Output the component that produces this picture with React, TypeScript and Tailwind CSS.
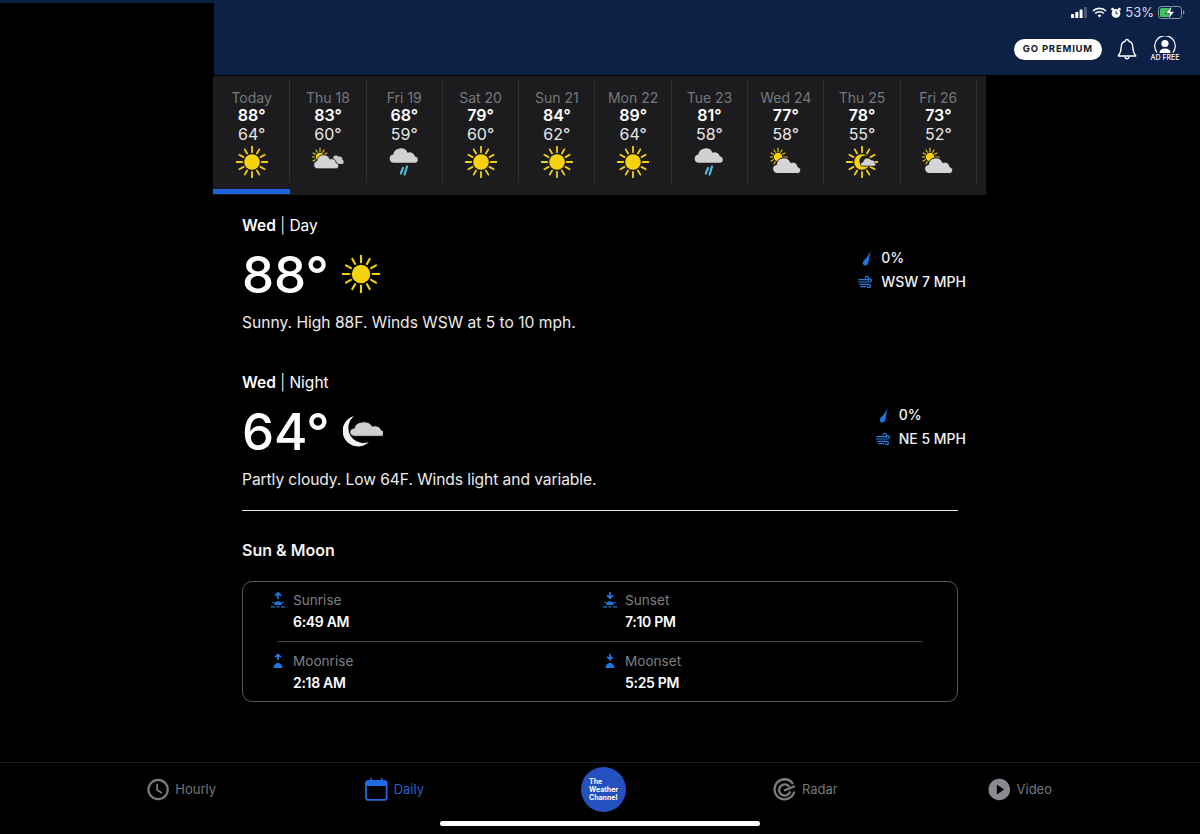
const FONT = "font-['Inter','Liberation_Sans',sans-serif]";

function SunRays({ r1 = 9.8, r2 = 15.6, w = 1.8 }: { r1?: number; r2?: number; w?: number }) {
  return (
    <g stroke="#f3d00f" strokeWidth={w} strokeLinecap="round">
      {[0, 30, 60, 90, 120, 150, 180, 210, 240, 270, 300, 330].map((a) => (
        <line key={a} x1="0" y1={-r1} x2="0" y2={-(a % 90 === 0 ? r2 : r2 - 1)} transform={`rotate(${a})`} />
      ))}
    </g>
  );
}

function Sun({ size = 32 }: { size?: number }) {
  return (
    <svg width={size} height={size} viewBox="-16 -16 32 32">
      <SunRays />
      <circle r="7.8" fill="#f5d20c" />
    </svg>
  );
}

const CLOUD = "M5 22a4.6 4.6 0 0 1 -.6 -9.1a7.6 7.6 0 0 1 14.6 -2.2a5.4 5.4 0 0 1 7.4 4.4a3.5 3.5 0 0 1 .1 6.9z";

function PartlyCloudy({ extra = false }: { extra?: boolean }) {
  return (
    <svg width="32" height="32" viewBox="0 0 32 32">
      <g transform="translate(8 11)">
        <SunRays r1={5.4} r2={9} w={1.1} />
        <circle r="4.2" fill="#f5d20c" />
      </g>
      {extra && <path d="M21 12a3 3 0 0 1 5.500 -1.200a2.600 2.600 0 0 1 3.700 3a2.200 2.200 0 0 1 -.7 4.300h-6z" fill="#c9c9cb" />}
      <g transform={extra ? "translate(1 3.500) scale(0.88)" : "translate(2 6) scale(0.98)"}>
        <path d={CLOUD} fill="#d4d4d6" stroke="#1c1c1e" strokeWidth="1" />
      </g>
    </svg>
  );
}

function Rain() {
  return (
    <svg width="32" height="32" viewBox="0 0 32 32">
      <path d={CLOUD} fill="#d1d1d3" transform="translate(1 -3) scale(0.98 0.9)" />
      <path d="M15 22l-2.200 5.500M19 20.500l-2.400 8" stroke="#58b7d6" strokeWidth="2.200" strokeLinecap="round" />
    </svg>
  );
}

function SunMoonCloud() {
  return (
    <svg width="32" height="32" viewBox="-16 -16 32 32">
      <SunRays />
      <circle r="7.8" fill="#f5d20c" />
      <circle cx="3" cy="-1" r="5.600" fill="#1c1c1e" />
      <path d="M-1 4a2.600 2.600 0 0 1 2 -4a4.400 4.400 0 0 1 8 -2a3.400 3.400 0 0 1 4 3a2 2 0 0 1 0 3z" fill="#d4d4d6" stroke="#1c1c1e" strokeWidth="0.6" />
    </svg>
  );
}

function NightCloud() {
  return (
    <svg width="40" height="34" viewBox="0 0 40 34">
      <path d="M11 2A15.500 15.500 0 1 0 26 28A15.200 15.200 0 0 1 11 2z" fill="#f2f2f2" />
      <path d={CLOUD} fill="#cfcfd1" stroke="#000" strokeWidth="0.8" transform="translate(6 2.500) scale(1.220 0.9)" />
    </svg>
  );
}

function Drop() {
  return (
    <svg width="12" height="16" viewBox="0 0 12 16">
      <path d="M10.500 .5C9.500 4 6.500 8 4 10.500c-1.800 1.800 -1.400 4.600 .8 4.900c2.400 .3 3.400 -1.700 3.800 -4c.5 -3.300 1.300 -7.500 1.900 -10.900z" fill="#1f78e0" />
    </svg>
  );
}

function Wind() {
  return (
    <svg width="16" height="14" viewBox="0 0 16 14" fill="none" stroke="#2a7fe6" strokeWidth="1.300" strokeLinecap="round">
      <path d="M1 4.500h8.500a1.800 1.800 0 1 0 -1.800 -2" />
      <path d="M0.500 7h12a1.700 1.700 0 1 0 -1.700 -1.800" />
      <path d="M2 9.500h9.500a1.700 1.700 0 1 1 -1.700 1.800" />
      <path d="M3 12h5" />
    </svg>
  );
}

function SunEvent({ up }: { up: boolean }) {
  return (
    <svg width="16" height="18" viewBox="0 0 16 18" fill="none">
      <path d={up ? "M8 8V2M5 4.800L8 1.800L11 4.800" : "M8 1V7M5 4.200L8 7.200L11 4.200"} stroke="#1f78e0" strokeWidth="1.700" />
      <path d="M4.300 14a3.700 3.700 0 0 1 7.400 0z" fill="#1f78e0" />
      <path d="M1 15.800h4M6.500 15.800h3M11 15.800h4M2.500 11l2 1.300M13.500 11l-2 1.300" stroke="#1f78e0" strokeWidth="1.200" />
    </svg>
  );
}

function MoonEvent({ up }: { up: boolean }) {
  return (
    <svg width="16" height="18" viewBox="0 0 16 18" fill="none">
      <path d={up ? "M8 8V2.500M5.200 5.200L8 2.400L10.800 5.200" : "M8 2V7.500M5.200 4.800L8 7.600L10.800 4.800"} stroke="#1f78e0" strokeWidth="1.800" />
      <path d="M3.500 16a4.500 5 0 0 1 9 0z" fill="#1f78e0" />
    </svg>
  );
}

function StatusIcons() {
  return (
    <div className="flex items-center">
      <svg width="16" height="11" viewBox="0 0 16 11">
        <rect x="0" y="7" width="3" height="4" rx=".6" fill="#fff" />
        <rect x="4.300" y="5" width="3" height="6" rx=".6" fill="#fff" />
        <rect x="8.600" y="2.500" width="3" height="8.500" rx=".6" fill="#fff" />
        <rect x="13" y="0" width="3" height="11" rx=".6" fill="#4a5a78" />
      </svg>
      <svg width="15" height="11" viewBox="0 0 15 11" fill="none" stroke="#fff" strokeWidth="1.700" className="ml-[5px]">
        <path d="M1 4a9.500 9.500 0 0 1 13 0" />
        <path d="M3.300 6.400a6.200 6.200 0 0 1 8.400 0" />
        <path d="M7.500 10.500L5.600 8.500a2.800 2.800 0 0 1 3.800 0z" fill="#fff" stroke="none" />
      </svg>
      <svg width="10" height="12" viewBox="0 0 11 12" className="ml-[4px]">
        <circle cx="5.500" cy="6.500" r="4.800" fill="#fff" />
        <circle cx="1.800" cy="1.800" r="1.500" fill="#fff" />
        <circle cx="9.200" cy="1.800" r="1.500" fill="#fff" />
        <path d="M5.500 3.500v3.200h2" stroke="#0d2147" strokeWidth="1" fill="none" />
      </svg>
      <span className="text-[13px] leading-none text-[#d8dce4] ml-[4px]">53%</span>
      <svg width="27" height="13" viewBox="0 0 27 13" className="ml-[4px]">
        <rect x=".5" y=".5" width="23" height="12" rx="3" fill="none" stroke="#8d97aa" />
        <rect x="2" y="2" width="11" height="9" rx="1.500" fill="#3fc35c" />
        <path d="M25 4.500v4c1 -.3 1.500 -1 1.500 -2s-.5 -1.700 -1.500 -2z" fill="#8d97aa" />
        <path d="M14 -.5L7.500 7.500h4l-1.500 6L16.500 5.500h-4z" fill="#fff" stroke="#0d2147" strokeWidth=".6" />
      </svg>
    </div>
  );
}

function Bell() {
  return (
    <svg width="20" height="23" viewBox="0 0 20 23" fill="none" stroke="#fff" strokeWidth="1.300" strokeLinejoin="round">
      <path d="M10 1.500c-1 0 -1.500 .6 -1.600 1.500C5.500 3.800 4.300 6 4.200 9c-.1 3.500 -.6 6 -3 9h17.600c-2.400 -3 -2.900 -5.500 -3 -9c-.1 -3 -1.300 -5.200 -4.200 -6c-.1 -.9 -.6 -1.500 -1.600 -1.500z" />
      <path d="M8 18.500c0 3 4 3 4 0" />
    </svg>
  );
}

function Account() {
  return (
    <svg width="22" height="17" viewBox="0 0 22 17" fill="none">
      <path d="M3 16.500a10.300 10.300 0 1 1 16 0" stroke="#fff" strokeWidth="1.200" />
      <circle cx="11" cy="7.500" r="3.600" fill="#fff" />
      <path d="M5.500 17c0 -3 2 -4.500 5.500 -4.500s5.500 1.500 5.500 4.500z" fill="#fff" />
    </svg>
  );
}

const DAYS = [
  { name: "Today", hi: 88, lo: 64, icon: <Sun /> },
  { name: "Thu 18", hi: 83, lo: 60, icon: <PartlyCloudy extra /> },
  { name: "Fri 19", hi: 68, lo: 59, icon: <Rain /> },
  { name: "Sat 20", hi: 79, lo: 60, icon: <Sun /> },
  { name: "Sun 21", hi: 84, lo: 62, icon: <Sun /> },
  { name: "Mon 22", hi: 89, lo: 64, icon: <Sun /> },
  { name: "Tue 23", hi: 81, lo: 58, icon: <Rain /> },
  { name: "Wed 24", hi: 77, lo: 58, icon: <PartlyCloudy /> },
  { name: "Thu 25", hi: 78, lo: 55, icon: <SunMoonCloud /> },
  { name: "Fri 26", hi: 73, lo: 52, icon: <PartlyCloudy /> },
];

function Forecast({ part, temp, icon, rain, wind, text, textClass }: { part: string; temp: number; icon: React.ReactNode; rain: string; wind: string; text: string; textClass?: string }) {
  return (
    <section className="h-[157px] w-[724px]">
      <p className="text-[15.500px] leading-[20px] text-white">
        <span className="font-semibold">Wed</span> <span className="font-light">|</span> {part}
      </p>
      <div className="flex items-start justify-between mt-[5px]">
        <div className="flex items-center h-[66px] gap-[13px]">
          <span className="text-[51px] font-medium leading-none text-white">{temp}°</span>
          {icon}
        </div>
        <div className="flex flex-col gap-[6px] text-[14px] font-medium leading-[18px] text-[#f2f2f2] mt-[7.500px]">
          <div className="flex items-center gap-[8px]">
            <span className="w-[15px] flex justify-center"><Drop /></span>
            <span>{rain}</span>
          </div>
          <div className="flex items-center gap-[8px]">
            <span className="w-[15px] flex justify-center"><Wind /></span>
            <span>{wind}</span>
          </div>
        </div>
      </div>
      <p className={`mt-[6px] text-[15.600px] leading-[20px] text-[#ececec] ${textClass ?? ""}`}>{text}</p>
    </section>
  );
}

function Astro({ icon, label, time }: { icon: React.ReactNode; label: string; time: string }) {
  return (
    <div className="flex gap-[7px]">
      <span className="w-[16px] h-[18px] mt-[1px]">{icon}</span>
      <div>
        <p className="text-[13.600px] leading-[20px] text-[#7f7f84]">{label}</p>
        <p className="mt-[2px] text-[14px] font-semibold leading-[20px] text-white tracking-[-0.3px]">{time}</p>
      </div>
    </div>
  );
}

function NavItem({ icon, label, className }: { icon: React.ReactNode; label: string; className: string }) {
  return (
    <div className={`flex items-center gap-[6px] text-[13px] ${className}`}>
      {icon}
      <span>{label}</span>
    </div>
  );
}

export default function App() {
  return (
    <div className={`relative w-[1200px] h-[834px] overflow-hidden bg-black flex flex-col ${FONT}`}>
      <header className="h-[75px] shrink-0 bg-[#0d2147] flex">
        <div className="w-[214px] mt-[3px] bg-black" />
        <div className="flex-1 flex flex-col items-end pr-[15px] pt-[6px]">
          <StatusIcons />
          <div className="flex items-center mt-[17px] pr-[6px]">
            <span className="h-[21px] px-[9px] flex items-center rounded-full bg-white text-[#12182b] text-[9.500px] font-bold tracking-[0.8px]">GO PREMIUM</span>
            <span className="ml-[15px]"><Bell /></span>
            <div className="ml-[14px] flex flex-col items-center w-[28px]">
              <Account />
              <span className="text-[7px] leading-[8px] mt-[1px] font-medium text-white whitespace-nowrap">AD FREE</span>
            </div>
          </div>
        </div>
      </header>

      <div className="ml-[213px] w-[773px] h-[119px] mt-[1px] shrink-0 bg-[#1c1c1e] flex flex-col">
        <div className="flex h-[108px] pt-[4px] pl-[1px]">
          {DAYS.map((d) => (
            <div key={d.name} className="w-[76.300px] h-[103px] border-r border-[#2e2e30] flex flex-col items-center pt-[9px]">
              <span className="text-[14px] leading-[17px] text-[#77777c]">{d.name}</span>
              <span className="text-[16px] leading-[18px] font-semibold text-white">{d.hi}°</span>
              <span className="text-[16px] leading-[20px] text-[#e8e8e8]">{d.lo}°</span>
              <span className="mt-[2px]">{d.icon}</span>
            </div>
          ))}
        </div>
        <div className="w-[77px] h-[5px] mt-[5px] bg-[#1d63db]" />
      </div>

      <main className="pl-[242px] pt-[21px] flex-1">
        <Forecast part="Day" temp={88} icon={<Sun size={38} />} rain="0%" wind="WSW 7 MPH" text="Sunny. High 88F. Winds WSW at 5 to 10 mph." />
        <Forecast part="Night" temp={64} icon={<NightCloud />} rain="0%" wind="NE 5 MPH" text="Partly cloudy. Low 64F. Winds light and variable." textClass="tracking-[-0.08px]" />
        <div className="w-[716px] h-px bg-[#e8e8e8] -mt-[20px]" />
        <h2 className="mt-[29px] text-[16px] leading-[20px] font-semibold text-[#f2f2f2]">Sun &amp; Moon</h2>
        <div className="mt-[21px] w-[716px] h-[121px] rounded-[10px] border border-[#5a5a5e] pt-[8px] pl-[27px] pr-[35px]">
          <div className="grid grid-cols-[332px_1fr] h-[51px]">
            <Astro icon={<SunEvent up />} label="Sunrise" time="6:49 AM" />
            <Astro icon={<SunEvent up={false} />} label="Sunset" time="7:10 PM" />
          </div>
          <div className="h-px bg-[#4a4a4e] ml-[8px]" />
          <div className="grid grid-cols-[332px_1fr] mt-[9px]">
            <Astro icon={<MoonEvent up />} label="Moonrise" time="2:18 AM" />
            <Astro icon={<MoonEvent up={false} />} label="Moonset" time="5:25 PM" />
          </div>
        </div>
      </main>

      <nav className="h-[72px] shrink-0 border-t border-[#1e1e20] flex items-center pl-[147px] pb-[18px]">
        <NavItem
          className="w-[69px] text-[#77777a]"
          label="Hourly"
          icon={
            <svg width="23" height="23" viewBox="0 0 23 23" fill="none" stroke="#7d7d80" strokeWidth="2.200">
              <circle cx="11.500" cy="11.500" r="10" />
              <path d="M10.500 5.500v6.500l5 3" strokeWidth="1.800" />
            </svg>
          }
        />
        <NavItem
          className="ml-[149px] w-[59px] text-[#2160cf]"
          label="Daily"
          icon={
            <svg width="23" height="23" viewBox="0 0 23 23" fill="none">
              <rect x="1" y="3" width="21" height="19" rx="2" stroke="#1f6ae6" strokeWidth="1.800" />
              <path d="M1 3.500a2 2 0 0 1 2 -1.500h17a2 2 0 0 1 2 1.500V8H1z" fill="#1f6ae6" />
              <path d="M6 0v3M17 0v3" stroke="#1f6ae6" strokeWidth="1.800" />
            </svg>
          }
        />
        <div className="ml-[157px] w-[45px] h-[45px] rounded-full bg-[#2450c0] flex items-center pl-[8px] text-[7px] font-bold leading-[8px] text-white">
          <span>The<br />Weather<br />Channel</span>
        </div>
        <NavItem
          className="ml-[147px] w-[65px] text-[#77777a]"
          label="Radar"
          icon={
            <svg width="23" height="23" viewBox="0 0 23 23" fill="none" stroke="#7d7d80" strokeWidth="2.300" strokeLinecap="round">
              <path d="M19.500 5.200A10 10 0 1 0 21 14.500" />
              <path d="M15.800 8.200a5.600 5.600 0 1 0 1 6" />
              <path d="M12 12.300l9 -3.800" />
            </svg>
          }
        />
        <NavItem
          className="ml-[150px] w-[64px] text-[#77777a]"
          label="Video"
          icon={
            <svg width="23" height="23" viewBox="0 0 23 23">
              <circle cx="11.500" cy="11.500" r="11" fill="#8a8a90" />
              <path d="M9 6.500l7.500 5l-7.500 5z" fill="#000" />
            </svg>
          }
        />
      </nav>

      <div className="absolute left-[440px] top-[821px] w-[320px] h-[5px] rounded-full bg-white" />
    </div>
  );
}
